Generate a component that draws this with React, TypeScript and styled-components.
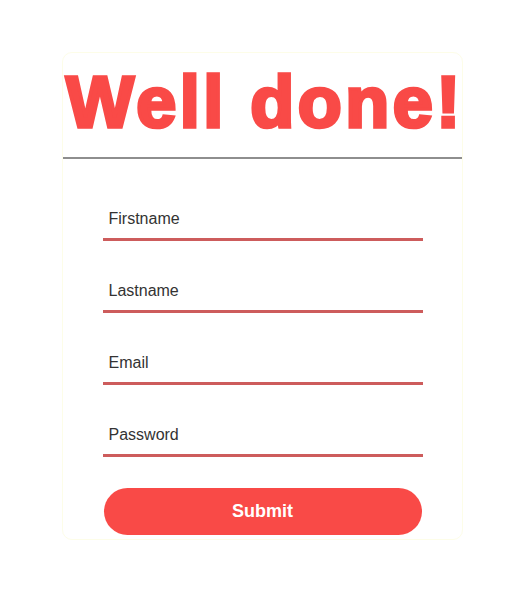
import styled, { createGlobalStyle } from "styled-components"

const GlobalStyle = createGlobalStyle`
  body {
    margin: 0;
    background: #fff;
    font-family: "Liberation Sans", Arial, sans-serif;
  }
`

const fields = ["Firstname", "Lastname", "Email", "Password"]

export default function App() {
  return (
    <>
      <GlobalStyle />
      <Page>
        <Card>
          <Title>Well done!</Title>
          <Divider />
          <Form onSubmit={(event) => event.preventDefault()}>
            {fields.map((name) => (
              <Input key={name} type="text" placeholder={name} />
            ))}
            <SubmitButton type="submit">Submit</SubmitButton>
          </Form>
        </Card>
      </Page>
    </>
  )
}

const Page = styled.div`
  display: flex;
  justify-content: center;
  padding: 52px 5px 0 0;
`
const Card = styled.div`
  width: 399px;
  border: 1px solid #fdfde8;
  border-radius: 10px;
  padding-bottom: 1px;
`
const Title = styled.h1`
  margin: 0;
  padding: 8px 0 0 3px;
  text-align: center;
  color: #f94a47;
  font-family: "Liberation Sans", Arial, sans-serif;
  font-weight: 700;
  font-size: 72px;
  line-height: 82px;
  letter-spacing: 3.5px;
  -webkit-text-stroke: 3.5px #f94a47;
  white-space: nowrap;
`
const Divider = styled.hr`
  margin: 14px 0 0;
  border: 0;
  height: 2px;
  background: #8e8e8e;
`
const Form = styled.form`
  display: flex;
  flex-direction: column;
  align-items: center;
  padding: 38px 0 0;
`
const Input = styled.input`
  box-sizing: border-box;
  width: 320px;
  height: 44px;
  margin-bottom: 28px;
  padding: 2px 6px 0;
  border: 0;
  border-bottom: 3px solid #cd5c5c;
  outline: none;
  font-family: "Liberation Sans", Arial, sans-serif;
  font-size: 16px;
  color: #333;
  background: transparent;

  &::placeholder {
    color: #333;
  }
`
const SubmitButton = styled.button`
  width: 318px;
  height: 47px;
  margin: 3px 0 3px;
  border: 0;
  border-radius: 24px;
  background: #f94a47;
  color: #fff;
  font-family: "Liberation Sans", Arial, sans-serif;
  font-weight: 700;
  font-size: 18px;
  cursor: pointer;
`
